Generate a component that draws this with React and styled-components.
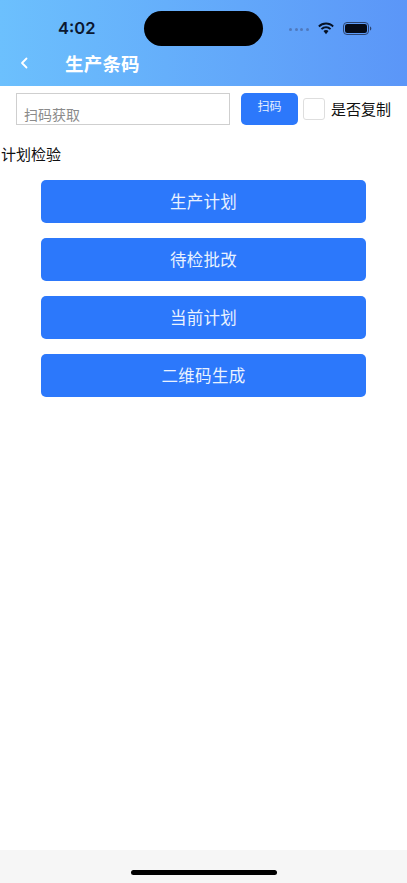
import styled, { createGlobalStyle } from "styled-components";

const GlobalStyle = createGlobalStyle`
    html, body {
        margin: 0;
        padding: 0;
        background: #fff;
        font-family: "Noto Sans CJK SC", "Liberation Sans", sans-serif;
    }
    * {
        box-sizing: border-box;
    }
`;

const Page = styled.div`
    width: 407px;
    height: 883px;
    display: flex;
    flex-direction: column;
    overflow: hidden;
    background: #fff;
`;

const Header = styled.header`
    height: 86px;
    flex-shrink: 0;
    background: linear-gradient(90deg, #6cc0fd 0%, #5b96f8 100%);
    display: flex;
    flex-direction: column;
`;

const StatusBar = styled.div`
    height: 46px;
    padding: 11px 0 0 58px;
    display: flex;
    align-items: flex-start;
`;

const Time = styled.span`
    width: 86px;
    font-family: Inter, "Liberation Sans", sans-serif;
    font-size: 16.5px;
    font-weight: 600;
    line-height: 35px;
    color: #0b1730;
`;

const Island = styled.div`
    width: 119px;
    height: 35px;
    border-radius: 18px;
    background: #000;
`;

const StatusIcons = styled.div`
    margin-left: 26px;
    height: 34px;
    display: flex;
    align-items: center;
`;

const Cell = styled.div`
    width: 28px;
    display: flex;
    gap: 2.500px;
    margin-top: 3px;
`;

const CellDot = styled.i`
    width: 3px;
    height: 3px;
    border-radius: 50%;
    background: #4f79bd;
`;

const Battery = styled.svg`
    margin-left: 8px;
`;

const TitleRow = styled.div`
    height: 34px;
    display: flex;
    align-items: center;
    padding: 0 0 1px 20px;
    color: #fff;
`;

const Back = styled.svg`
    width: 9px;
    height: 12px;
`;

const Title = styled.h1`
    margin: 0 0 0 36px;
    font-size: 18.5px;
    font-weight: 700;
    letter-spacing: 0.2px;
    line-height: 32px;
`;

const Content = styled.main`
    flex: 1;
    display: flex;
    flex-direction: column;
`;

const ScanRow = styled.div`
    display: flex;
    align-items: flex-start;
    padding: 7px 0 0 16px;
`;

const ScanInput = styled.div`
    width: 214px;
    height: 32px;
    border: 1px solid #cfcfcf;
    padding: 10px 0 0 7px;
    font-size: 14px;
    line-height: 21px;
    color: #8b8b8b;
`;

const ScanButton = styled.button`
    width: 57px;
    height: 32px;
    margin-left: 11px;
    padding: 0 0 7px;
    border: 0;
    border-radius: 5px;
    background: #2c78fb;
    color: #e6f0ff;
    font-family: inherit;
    font-size: 12px;
`;

const CopyBox = styled.span`
    width: 22px;
    height: 22px;
    margin: 5px 0 0 5px;
    border: 1px solid #dedede;
    border-radius: 3px;
    background: #fff;
`;

const CopyLabel = styled.span`
    margin-left: 6px;
    font-size: 15px;
    line-height: 32px;
    color: #111;
`;

const SectionLabel = styled.div`
    margin-top: 14px;
    padding-left: 1px;
    font-size: 15px;
    line-height: 30px;
    color: #111;
`;

const Menu = styled.div`
    margin-top: 11px;
    padding: 0 41px;
    display: flex;
    flex-direction: column;
    gap: 15px;
`;

const MenuButton = styled.button`
    width: 325px;
    height: 43px;
    padding: 0 0 1px;
    border: 0;
    border-radius: 5px;
    background: #2c78fb;
    color: #e9f2ff;
    font-family: inherit;
    font-size: 16.5px;
    letter-spacing: 0.3px;
`;

const HomeBar = styled.footer`
    height: 33px;
    flex-shrink: 0;
    background: #f6f6f6;
    display: flex;
    justify-content: center;
    padding-top: 20px;
`;

const HomeIndicator = styled.div`
    width: 146px;
    height: 5px;
    border-radius: 3px;
    background: #000;
`;

const menuItems = ["生产计划", "待检批改", "当前计划", "二维码生成"];

function App() {
    return (
        <Page>
            <GlobalStyle />
            <Header>
                <StatusBar>
                    <Time>4:02</Time>
                    <Island />
                    <StatusIcons>
                        <Cell>
                            <CellDot />
                            <CellDot />
                            <CellDot />
                            <CellDot />
                        </Cell>
                        <svg width="18" height="13" viewBox="0 0 18 13" fill="#061225">
                            <path d="M9 2.6c2.5 0 4.8 1 6.5 2.6l1.3-1.4A11.300 11.300 0 0 0 9 .6 11.300 11.300 0 0 0 1.200 3.800l1.300 1.400A9.400 9.400 0 0 1 9 2.600z" />
                            <path d="M9 6.300c1.500 0 2.900.6 3.900 1.500l1.300-1.400A7.600 7.600 0 0 0 9 4.300a7.600 7.600 0 0 0-5.200 2.100l1.300 1.400c1-.9 2.400-1.500 3.900-1.500z" />
                            <path d="M9 8.100c-1 0-1.800.4-2.500 1L9 12.200l2.500-3.100c-.7-.6-1.500-1-2.500-1z" />
                        </svg>
                        <Battery width="29" height="13" viewBox="0 0 29 13">
                            <rect x="0.500" y="0.500" width="25" height="12" rx="3.500" fill="none" stroke="#2c4470" />
                            <rect x="2" y="2" width="22" height="9" rx="2.200" fill="#050b18" />
                            <path d="M27 4.500c.8.300 1.300 1 1.300 2s-.5 1.700-1.300 2z" fill="#2c4470" />
                        </Battery>
                    </StatusIcons>
                </StatusBar>
                <TitleRow>
                    <Back viewBox="0 0 9 12" fill="none" stroke="#fff" strokeWidth="1.800" strokeLinecap="round" strokeLinejoin="round">
                        <path d="M6.500 1.500 2 6l4.500 4.500" />
                    </Back>
                    <Title>生产条码</Title>
                </TitleRow>
            </Header>
            <Content>
                <ScanRow>
                    <ScanInput>扫码获取</ScanInput>
                    <ScanButton>扫码</ScanButton>
                    <CopyBox />
                    <CopyLabel>是否复制</CopyLabel>
                </ScanRow>
                <SectionLabel>计划检验</SectionLabel>
                <Menu>
                    {menuItems.map((item) => (
                        <MenuButton key={item}>{item}</MenuButton>
                    ))}
                </Menu>
            </Content>
            <HomeBar>
                <HomeIndicator />
            </HomeBar>
        </Page>
    );
}

export default App;
